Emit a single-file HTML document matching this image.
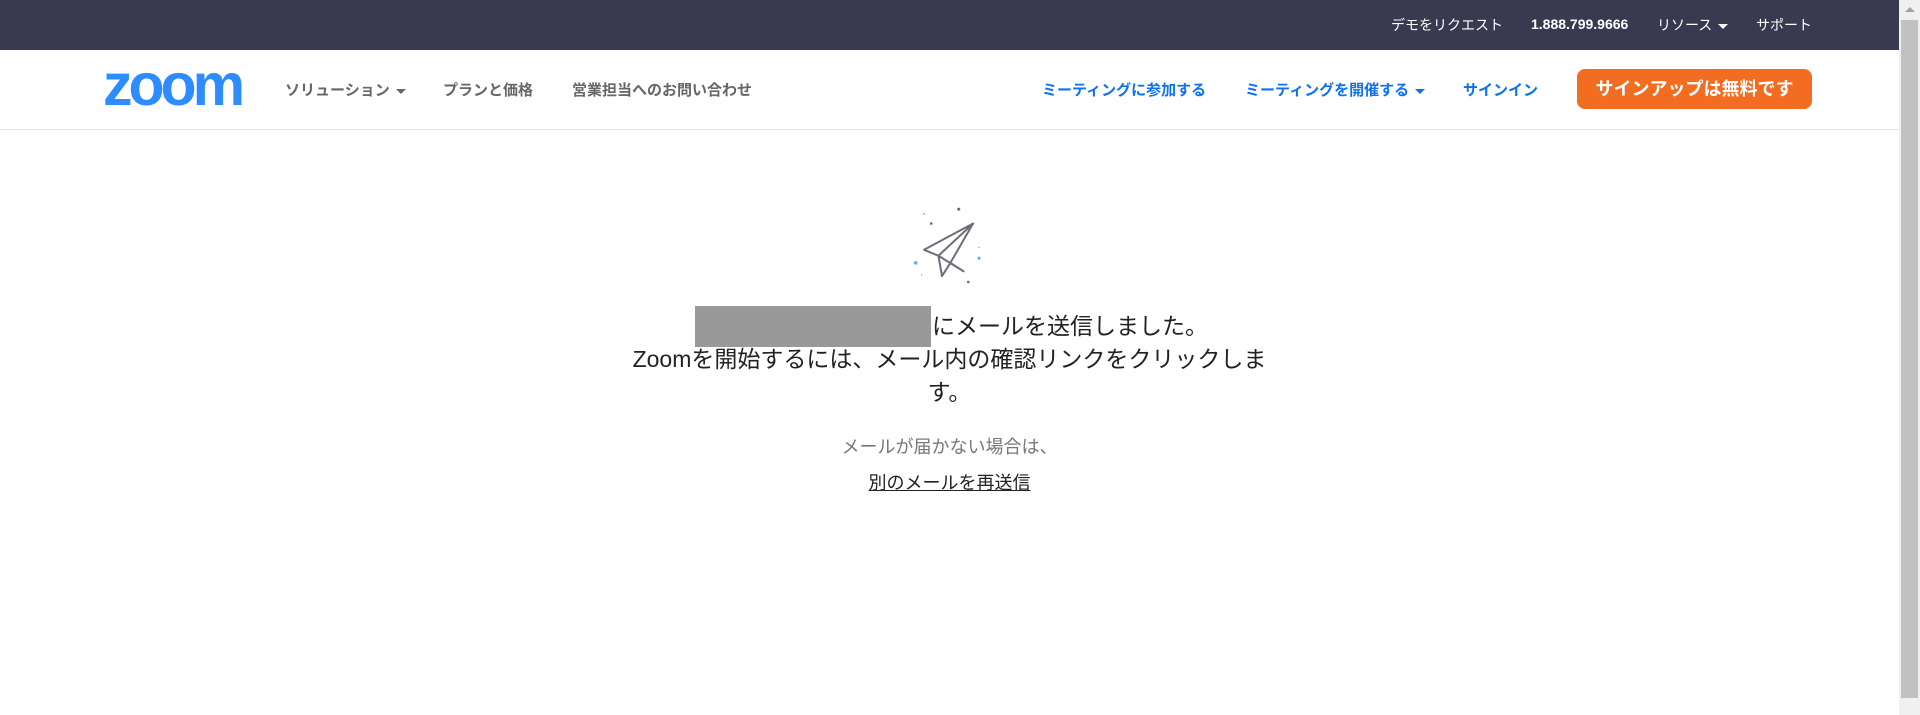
<!DOCTYPE html>
<html><head><meta charset="utf-8"><style>
*{margin:0;padding:0;box-sizing:border-box}
body{width:1920px;height:715px;overflow:hidden;background:#fff;font-family:"Liberation Sans","Noto Sans CJK JP",sans-serif;position:relative}
.top{position:absolute;left:0;top:0;width:1899px;height:50px;background:#393a4f;color:#fff;font-size:14px}
.top span{position:absolute;top:15px;white-space:nowrap}
.nav{position:absolute;left:0;top:50px;width:1899px;height:80px;border-bottom:1px solid #e6e6e6}
.nav span{position:absolute;top:29px;font-size:15px;font-weight:bold;white-space:nowrap}
.g{color:#666}.b{color:#0e72ed}
.car{display:inline-block;width:0;height:0;border-left:5px solid transparent;border-right:5px solid transparent;border-top:5px solid currentColor;vertical-align:middle;margin-left:6px}
.btn{position:absolute;left:1577px;top:69px;width:235px;height:40px;background:#f26d21;border-radius:8px;color:#fff;font-size:18px;font-weight:bold;text-align:center;line-height:40px}
.logo{position:absolute;left:103px;top:56px;font-size:59px;line-height:1;font-weight:bold;color:#2d8cff;letter-spacing:-4px;font-family:"Liberation Sans",sans-serif}
.sb{position:absolute;left:1899px;top:0;width:21px;height:715px;background:#f0f0f0}
.thumb{position:absolute;left:1901px;top:20px;width:17px;height:678px;background:#c1c1c1}
.arr{position:absolute;left:1905px;top:7px;border-left:5px solid transparent;border-right:5px solid transparent;border-bottom:5px solid #a3a3a3}
.msg{position:absolute;left:0;width:1899px;text-align:center;font-size:23px;color:#222;line-height:33px;white-space:nowrap}
.redact{position:absolute;left:695px;top:306px;width:236px;height:41px;background:#999}
</style></head><body>
<div class="top">
<span style="left:1391px">デモをリクエスト</span>
<span style="left:1531px;top:16px;font-weight:bold">1.888.799.9666</span>
<span style="left:1657px">リソース<i class="car" style="border-top-color:#fff"></i></span>
<span style="left:1756px">サポート</span>
</div>
<div class="nav">
<span class="g" style="left:285px">ソリューション<i class="car"></i></span>
<span class="g" style="left:443px">プランと価格</span>
<span class="g" style="left:572px">営業担当へのお問い合わせ</span>
<span class="b" style="left:1042px">ミーティングに参加する</span>
<span class="b" style="left:1245px">ミーティングを開催する<i class="car"></i></span>
<span class="b" style="left:1463px">サインイン</span>
</div>
<div class="logo">zoom</div>
<div class="btn">サインアップは無料です</div>
<svg style="position:absolute;left:894px;top:202px" width="96" height="86" viewBox="0 0 80 72">
<g stroke="#6e6e7a" stroke-width="1.7" fill="none" stroke-linejoin="round">
<path d="M66 18 L25 40 L37 45 Z M37 45 L40 62 L47 51 L58 58 Z M37 45 L66 18 M47 51 L66 18"/>
</g>
<g fill="#6e6e7a"><circle cx="54" cy="6" r="1.3"/><circle cx="31" cy="18" r="1.1"/><circle cx="62" cy="67" r="1.1"/><circle cx="25" cy="10" r="0.6"/></g>
<g fill="#6aa8f0"><circle cx="18" cy="51" r="1.5"/><circle cx="71" cy="47" r="1.3"/><circle cx="23" cy="61" r="0.6"/><circle cx="71" cy="38" r="0.6"/></g>
</svg>
<div class="redact"></div>
<div class="msg" style="top:310px;left:932px;width:auto;text-align:left">にメールを送信しました。</div>
<div class="msg" style="top:343px">Zoomを開始するには、メール内の確認リンクをクリックしま</div>
<div class="msg" style="top:376px">す。</div>
<div style="position:absolute;left:0;width:1899px;top:433px;text-align:center;font-size:18px;color:#777">メールが届かない場合は、</div>
<div style="position:absolute;left:0;width:1899px;top:469px;text-align:center;font-size:18px;color:#222"><u>別のメールを再送信</u></div>
<div class="sb"></div><div class="thumb"></div><div class="arr"></div>
</body></html>
